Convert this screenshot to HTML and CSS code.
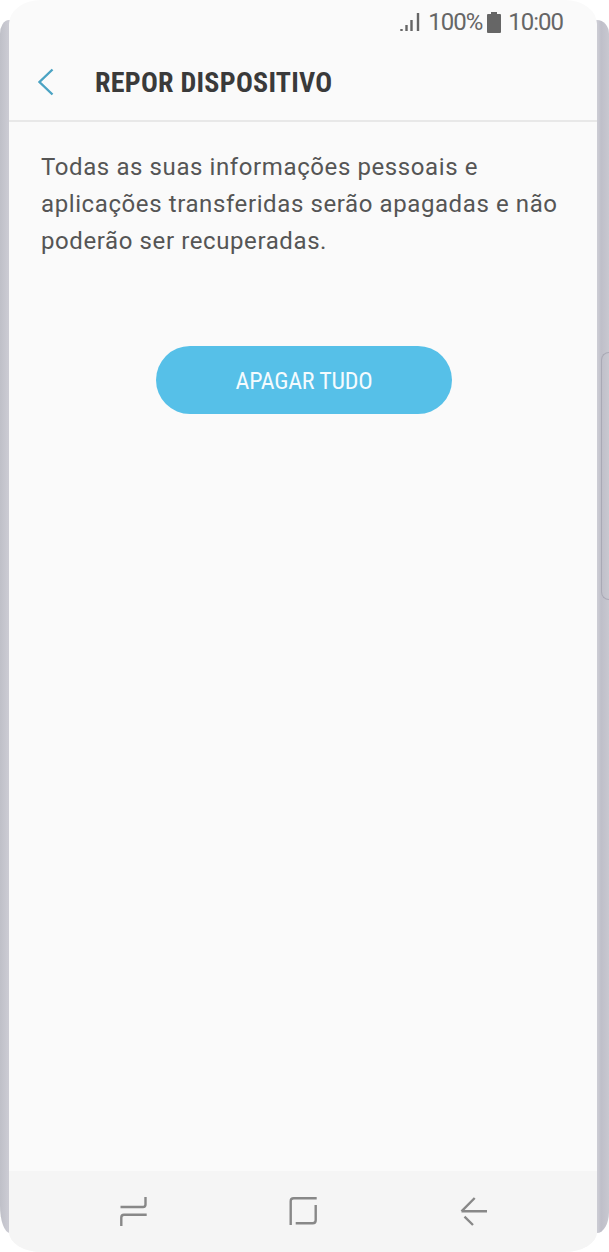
FILE: index.html
```html
<!DOCTYPE html>
<html lang="pt">
<head>
    <meta charset="UTF-8">
    <title>Repor dispositivo</title>
    <link rel="stylesheet" href="styles.css">
</head>
<body>
    <div class="phone">
        <div class="side-key"></div>
        <div class="screen">
            <div class="status">
                <svg class="signal" width="20" height="20" viewBox="0 0 20 20"><path d="M1.500 17v2M6.500 13v6M11.500 8v11M18 1v18" stroke="#666" stroke-width="2.4" fill="none"/></svg>
                <span class="status-text">100%</span>
                <svg class="battery" width="14" height="21" viewBox="0 0 14 21"><path d="M4 0h6v2h3a1 1 0 0 1 1 1v17a1 1 0 0 1-1 1H1a1 1 0 0 1-1-1V3a1 1 0 0 1 1-1h3z" fill="#666"/></svg>
                <span class="status-text">10:00</span>
            </div>
            <div class="header">
                <svg class="back" width="18" height="28" viewBox="0 0 18 28"><path d="M15.500 1.500L2.500 14l13 12.500" stroke="#4ba3c3" stroke-width="2.4" fill="none"/></svg>
                <h1 class="title">REPOR DISPOSITIVO</h1>
            </div>
            <div class="content">
                <p class="message">Todas as suas informações pessoais e aplicações transferidas serão apagadas e não poderão ser recuperadas.</p>
                <button class="erase">APAGAR TUDO</button>
            </div>
            <div class="navbar">
                <svg width="30" height="32" viewBox="0 0 30 32"><path d="M27.500 1v7.500q0 2.500-2.500 2.500H2.500M28.700 18.700H6q-2.700 0-2.700 2.700V30" stroke="#888" stroke-width="2.400" fill="none"/></svg>
                <svg width="30" height="32" viewBox="0 0 30 32"><path d="M28.700 2.300H5.700q-3 0-3 3V29M7.700 27.300h17q3 0 3-3V9" stroke="#888" stroke-width="2.400" fill="none"/></svg>
                <svg width="30" height="32" viewBox="0 0 30 32"><path d="M29 15.300H3.500M16.700 2L3.500 15.300M6.500 20.700l8.500 8.300" stroke="#888" stroke-width="2.400" fill="none"/></svg>
            </div>
        </div>
    </div>
</body>
</html>
```
FILE: styles.css
```css
*{
    margin: 0px;
    padding: 0px;
    box-sizing: border-box;
}
body{
    background-color: white;
    font-family: Roboto, sans-serif;
    width: 609px;
    height: 1252px;
    overflow: hidden;
}
.phone{
    position: relative;
    height: 1252px;
    padding: 0px 12px 0px 9px;
}
.phone::before{
    content: "";
    position: absolute;
    top: 20px;
    bottom: 19px;
    left: 0px;
    right: 0px;
    background: linear-gradient(to right, #bfc0c8, #cbcbd3 8px, #cbcbd3 598px, #bfbfc9 601px, #c8c8d0);
    border-radius: 9px 12px 0px 0px / 14px 14px 0px 0px;
    border-bottom-left-radius: 10px 27px;
    border-bottom-right-radius: 12px 21px;
}
.side-key{
    position: absolute;
    top: 352px;
    right: 0px;
    width: 8px;
    height: 248px;
    border: 1px solid #a9a9b5;
    border-right: 0;
    border-radius: 8px 0px 0px 8px;
    z-index: 1;
}
.screen{
    position: relative;
    display: flex;
    flex-direction: column;
    height: 1252px;
    background-color: #fafafa;
    border-radius: 32px 32px 33px 33px / 24px 24px 20px 20px;
    overflow: hidden;
}
.status{
    display: flex;
    align-items: center;
    justify-content: flex-end;
    height: 44px;
    padding-right: 34px;
    color: #666;
}
.status-text{
    font-size: 24px;
    letter-spacing: -1px;
}
.signal{
    margin-right: 8px;
}
.battery{
    margin: 0px 7px 0px 5px;
}
.header{
    display: flex;
    align-items: center;
    height: 78px;
    padding-left: 28px;
    border-bottom: 2px solid #e8e8e8;
}
.title{
    margin-left: 40px;
    font-size: 28px;
    font-weight: 700;
    color: #3a3a3a;
    font-stretch: 75%;
    letter-spacing: 0.25px;
}
.content{
    flex: 1;
    display: flex;
    flex-direction: column;
    align-items: center;
}
.message{
    width: 100%;
    padding: 27px 20px 0px 32px;
    font-size: 24px;
    line-height: 37px;
    color: #555;
    letter-spacing: 0.6px;
}
.erase{
    width: 296px;
    height: 68px;
    margin: 86px 0px 0px 2px;
    padding-top: 2px;
    border: 0;
    border-radius: 34px;
    background-color: #56c0e8;
    color: #f4fbfe;
    font-family: Roboto, sans-serif;
    font-size: 24px;
    font-stretch: 75%;
    letter-spacing: -0.2px;
}
.navbar{
    display: flex;
    align-items: center;
    gap: 140px;
    height: 81px;
    padding-left: 109px;
    background-color: #f5f5f5;
}
```
